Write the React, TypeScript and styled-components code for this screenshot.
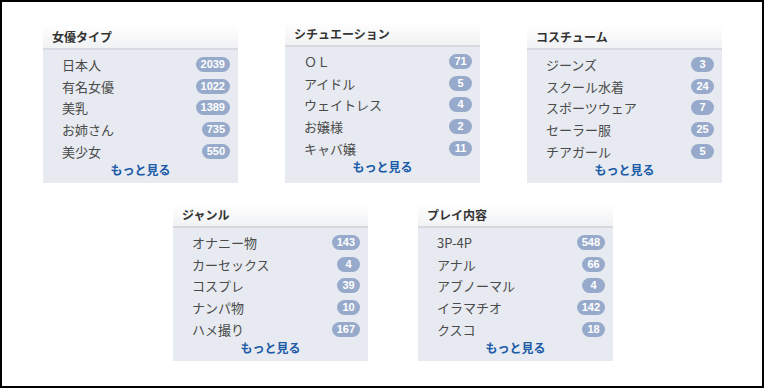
import React from 'react'
import styled, { createGlobalStyle } from 'styled-components'

const GlobalStyle = createGlobalStyle`
  html, body {
    margin: 0;
    padding: 0;
    background: #ffffff;
  }
  body {
    font-family: "Noto Sans CJK JP", "Liberation Sans", sans-serif;
  }
`

const Frame = styled.div`
  box-sizing: border-box;
  width: 764px;
  height: 388px;
  border: 2px solid #000;
  background: #fff;
  display: flex;
  flex-direction: column;
`

const PanelRow = styled.div<{ $top: number; $left: number; $gap: number }>`
  display: flex;
  align-items: flex-start;
  gap: ${p => p.$gap}px;
  padding-top: ${p => p.$top}px;
  padding-left: ${p => p.$left}px;
`

const Panel = styled.section<{ $lift?: number }>`
  width: 195px;
  margin-top: ${p => -(p.$lift ?? 0)}px;
  background: #e7eaf0;
`

const PanelHeader = styled.h3`
  margin: 0;
  height: 23px;
  line-height: 23px;
  padding: 0 9px;
  font-size: 12px;
  font-weight: 600;
  color: #333;
  background: linear-gradient(#ffffff, #f1f2f4);
  border-bottom: 2px solid #d6d9de;
`

const PanelBody = styled.div<{ $extra?: number }>`
  padding: 4px 8px ${p => 5 + (p.$extra ?? 0)}px 19px;
`

const ItemList = styled.ul`
  list-style: none;
  margin: 0;
  padding: 0;
`

const Item = styled.li`
  display: flex;
  align-items: center;
  justify-content: space-between;
  height: 21.6px;
  font-size: 13px;
  color: #4a4a4a;
`

const Badge = styled.span`
  box-sizing: border-box;
  min-width: 23px;
  height: 15px;
  line-height: 15px;
  padding: 0 5px;
  border-radius: 8px;
  background: #98aacb;
  color: #fff;
  font-family: "Liberation Sans", sans-serif;
  font-size: 11px;
  font-weight: bold;
  text-align: center;
`

const More = styled.a`
  display: block;
  margin-left: -11px;
  text-align: center;
  font-size: 12px;
  font-weight: bold;
  color: #1c5ba8;
  text-decoration: none;
  height: 16px;
  line-height: 16px;
`

type Category = {
  title: string
  items: [string, number][]
  lift?: number
}

const row1: Category[] = [
  {
    title: '女優タイプ',
    items: [['日本人', 2039], ['有名女優', 1022], ['美乳', 1389], ['お姉さん', 735], ['美少女', 550]],
  },
  {
    title: 'シチュエーション',
    items: [['ＯＬ', 71], ['アイドル', 5], ['ウェイトレス', 4], ['お嬢様', 2], ['キャバ嬢', 11]],
    lift: 3,
  },
  {
    title: 'コスチューム',
    items: [['ジーンズ', 3], ['スクール水着', 24], ['スポーツウェア', 7], ['セーラー服', 25], ['チアガール', 5]],
  },
]

const row2: Category[] = [
  {
    title: 'ジャンル',
    items: [['オナニー物', 143], ['カーセックス', 4], ['コスプレ', 39], ['ナンパ物', 10], ['ハメ撮り', 167]],
  },
  {
    title: 'プレイ内容',
    items: [['3P-4P', 548], ['アナル', 66], ['アブノーマル', 4], ['イラマチオ', 142], ['クスコ', 18]],
  },
]

const CategoryPanel: React.FC<{ cat: Category }> = ({ cat }) => (
  <Panel $lift={cat.lift}>
    <PanelHeader>{cat.title}</PanelHeader>
    <PanelBody $extra={cat.lift}>
      <ItemList>
        {cat.items.map(([name, count]) => (
          <Item key={name}>
            <span>{name}</span>
            <Badge>{count}</Badge>
          </Item>
        ))}
      </ItemList>
      <More href="#">もっと見る</More>
    </PanelBody>
  </Panel>
)

export default function App() {
  return (
    <>
      <GlobalStyle />
      <Frame>
        <PanelRow $top={23} $left={41} $gap={47}>
          {row1.map(c => <CategoryPanel key={c.title} cat={c} />)}
        </PanelRow>
        <PanelRow $top={20} $left={171} $gap={50}>
          {row2.map(c => <CategoryPanel key={c.title} cat={c} />)}
        </PanelRow>
      </Frame>
    </>
  )
}
